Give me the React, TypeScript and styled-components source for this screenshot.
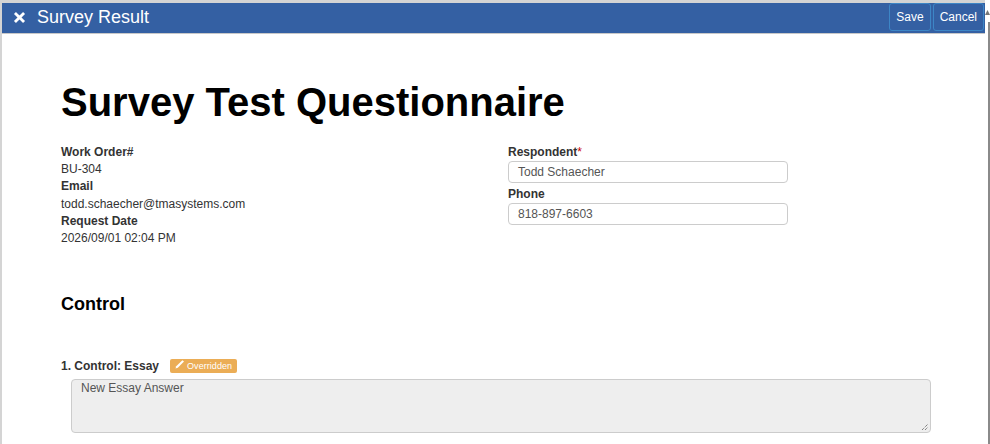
import React from 'react';
import styled, {createGlobalStyle} from 'styled-components';

const GlobalStyle = createGlobalStyle`
  html, body {
    margin: 0;
    padding: 0;
    background: #fff;
    overflow: hidden;
  }
  body {
    font-family: "Liberation Sans", Arial, sans-serif;
    font-size: 12px;
    line-height: 17px;
    color: #333;
  }
`;

const Window = styled.div`
  width: 990px;
  height: 444px;
  overflow: hidden;
  box-sizing: border-box;
  display: flex;
  background: #fff;
`;

const Panel = styled.div`
  width: 985px;
  height: 444px;
  box-sizing: border-box;
  border-top: 3px solid #d4d4d4;
  border-left: 2px solid #d4d4d4;
  overflow: hidden;
`;

const Scrollbar = styled.div`
  flex: 1;
  display: flex;
  flex-direction: column;
  align-items: flex-end;
  padding-top: 10px;
  svg {
    display: block;
  }
`;

const ScrollThumb = styled.div`
  width: 2px;
  flex: 1;
  margin-top: 7px;
  background: #8a8a8a;
`;

const Header = styled.div`
  height: 30px;
  background: #3460a3;
  border-bottom: 1px solid #c8c8c8;
  display: flex;
  align-items: center;
  padding: 0 1px 0 11px;
  color: #fff;
`;

const CloseIcon = styled.svg`
  width: 13px;
  height: 13px;
  margin: -2px 11px 0 0;
`;

const Title = styled.div`
  flex: 1;
  font-size: 18px;
  margin-top: -2px;
`;

const HeaderButton = styled.button`
  height: 28px;
  margin: 0 0 2px 2px;
  padding: 0 6px;
  background: #3460a3;
  border: 1px solid #3d86c6;
  border-radius: 3px;
  color: #fff;
  font-family: inherit;
  font-size: 12px;
`;

const Content = styled.div`
  padding: 0 52px 0 59px;
`;

const Heading = styled.h1`
  margin: 43px 0 0;
  font-size: 40px;
  line-height: 50px;
  font-weight: 700;
  color: #000;
`;

const InfoGrid = styled.div`
  display: grid;
  grid-template-columns: 447px 280px;
  margin-top: 17px;
`;

const InfoColumn = styled.div`
  display: flex;
  flex-direction: column;
`;

const Label = styled.div`
  font-weight: 700;
  height: 17.2px;
`;

const Value = styled.div`
  height: 17.2px;
`;

const Required = styled.span`
  color: #c00;
  font-weight: 400;
`;

const TextInput = styled.div`
  height: 22px;
  box-sizing: border-box;
  border: 1px solid #ccc;
  border-radius: 4px;
  padding-left: 9px;
  line-height: 20px;
  color: #555;
  margin-bottom: 3px;
`;

const SectionTitle = styled.h2`
  margin: 46px 0 0;
  font-size: 18px;
  line-height: 22px;
  font-weight: 700;
  color: #000;
`;

const QuestionRow = styled.div`
  display: flex;
  align-items: center;
  margin-top: 43px;
  height: 17px;
`;

const QuestionLabel = styled.div`
  font-weight: 700;
`;

const Badge = styled.span`
  display: inline-flex;
  align-items: center;
  height: 14px;
  margin: -1px 0 0 11px;
  padding: 0 5px 0 4px;
  background: #ebad56;
  border-radius: 2px;
  color: #fff;
  font-size: 9px;
  line-height: 14px;
  letter-spacing: 0.05px;
  svg {
    width: 11px;
    height: 11px;
    margin: -3px 2px 0 0;
  }
`;

const AnswerBox = styled.div`
  position: relative;
  height: 54px;
  box-sizing: border-box;
  margin: 4px 0 0 10px;
  width: 860px;
  padding: 1px 9px 0;
  background: #eee;
  border: 1px solid #ccc;
  border-radius: 4px;
  color: #555;
  line-height: 15px;
`;

const ResizeGrip = styled.svg`
  position: absolute;
  right: 1px;
  bottom: 1px;
  width: 8px;
  height: 8px;
`;

export default function App() {
  return (
    <Window>
      <GlobalStyle/>
      <Panel>
        <Header>
          <CloseIcon viewBox="0 0 12 12">
            <path d="M1.8 1.8 L10.2 10.2 M10.2 1.8 L1.8 10.2" stroke="#fff" strokeWidth="2.6" fill="none"/>
          </CloseIcon>
          <Title>Survey Result</Title>
          <HeaderButton>Save</HeaderButton>
          <HeaderButton>Cancel</HeaderButton>
        </Header>
        <Content>
          <Heading>Survey Test Questionnaire</Heading>
          <InfoGrid>
            <InfoColumn>
              <Label>Work Order#</Label>
              <Value>BU-304</Value>
              <Label>Email</Label>
              <Value>todd.schaecher@tmasystems.com</Value>
              <Label>Request Date</Label>
              <Value>2026/09/01 02:04 PM</Value>
            </InfoColumn>
            <InfoColumn>
              <Label>Respondent<Required>*</Required></Label>
              <TextInput>Todd Schaecher</TextInput>
              <Label>Phone</Label>
              <TextInput>818-897-6603</TextInput>
            </InfoColumn>
          </InfoGrid>
          <SectionTitle>Control</SectionTitle>
          <QuestionRow>
            <QuestionLabel>1. Control: Essay</QuestionLabel>
            <Badge>
              <svg viewBox="0 0 11 11">
                <path d="M1.5 9.5 L2.2 7.2 L8.4 1.2 L10 2.6 L3.8 8.7 Z" fill="#fff"/>
              </svg>
              Overridden
            </Badge>
          </QuestionRow>
          <AnswerBox>
            New Essay Answer
            <ResizeGrip viewBox="0 0 8 8">
              <path d="M1 7 L7 1 M4 7 L7 4" stroke="#555" strokeWidth="1" strokeDasharray="1 1" fill="none"/>
            </ResizeGrip>
          </AnswerBox>
        </Content>
      </Panel>
      <Scrollbar>
        <svg width="5" height="5" viewBox="0 0 5 5">
          <path d="M2.5 0 L5 5 L0 5 Z" fill="#777"/>
        </svg>
        <ScrollThumb/>
      </Scrollbar>
    </Window>
  );
}
